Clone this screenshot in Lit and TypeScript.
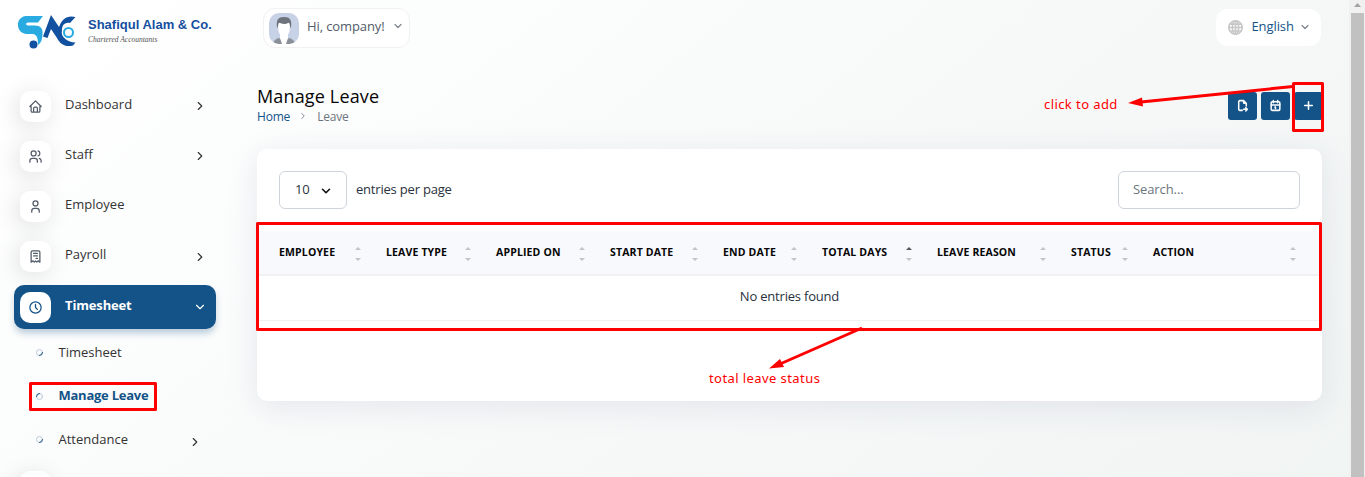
import { LitElement, html, css, svg } from "lit";
import { customElement } from "lit/decorators.js";
import { classMap } from "lit/directives/class-map.js";

const chevron = (cls: string, d = "M9 6l6 6-6 6") =>
  html`<svg class=${cls} viewBox="0 0 24 24"><path d=${d} /></svg>`;
const DOWN = "M6 9l6 6 6-6";

const icons: Record<string, unknown> = {
  home: svg`<path d="M5 12H3l9-9 9 9h-2M5 12v7a2 2 0 0 0 2 2h10a2 2 0 0 0 2-2v-7M9 21v-6a2 2 0 0 1 2-2h2a2 2 0 0 1 2 2v6"/>`,
  users: svg`<circle cx="9" cy="7" r="4"/><path d="M3 21v-2a4 4 0 0 1 4-4h4a4 4 0 0 1 4 4v2M16 3.13a4 4 0 0 1 0 7.75M21 21v-2a4 4 0 0 0-3-3.85"/>`,
  user: svg`<circle cx="12" cy="7" r="4"/><path d="M6 21v-2a4 4 0 0 1 4-4h4a4 4 0 0 1 4 4v2"/>`,
  receipt: svg`<path d="M5 21V5a2 2 0 0 1 2-2h10a2 2 0 0 1 2 2v16l-3-2-2 2-2-2-2 2-2-2-3 2M9 7h6M9 11h6M13 15h2"/>`,
  clock: svg`<circle cx="12" cy="12" r="9"/><path d="M12 7v5l3 3"/>`,
  exportFile: svg`<path d="M14 3v4a1 1 0 0 0 1 1h4M11.500 21H7a2 2 0 0 1-2-2V5a2 2 0 0 1 2-2h7l5 5v5m-5 6h7m-3-3l3 3-3 3"/>`,
  calendar: svg`<rect x="4" y="5" width="16" height="16" rx="2"/><path d="M16 3v4M8 3v4M4 11h16M11 15h1M12 15v3"/>`,
  plus: svg`<path d="M12 5v14M5 12h14"/>`,
};
const icon = (name: string, cls = "icon") =>
  html`<svg class=${cls} viewBox="0 0 24 24">${icons[name]}</svg>`;

const NAV = [
  { label: "Dashboard", icon: "home", arrow: true },
  { label: "Staff", icon: "users", arrow: true },
  { label: "Employee", icon: "user", arrow: false },
  { label: "Payroll", icon: "receipt", arrow: true },
];

const COLUMNS = [
  "Employee", "Leave Type", "Applied On", "Start Date", "End Date",
  "Total Days", "Leave Reason", "Status", "Action",
];

@customElement("side-nav")
class SideNav extends LitElement {
  static styles = css`
    :host { display: block; width: 230px; flex: none; color: #333; }
    svg { fill: none; stroke: currentColor; stroke-width: 2; stroke-linecap: round; stroke-linejoin: round; }
    .brand { height: 84px; box-sizing: border-box; padding: 14px 0 0 17px; display: flex; gap: 12px; }
    .mark { width: 59px; height: 35px; stroke: none; flex: none; }
    .name { font: bold 13px/18px "Liberation Sans", Arial, sans-serif; color: #164fa0; white-space: nowrap; padding-top: 2px; letter-spacing: 0; }
    .tag { font: italic 7.5px/11px "Liberation Serif", serif; color: #555; white-space: nowrap; }
    .row { display: flex; align-items: center; height: 44px; margin: 0 14px 6.25px; padding-left: 6px; box-sizing: border-box; border-radius: 10px; }
    .box { width: 31px; height: 31px; border-radius: 10px; background: #fff; box-shadow: -3px 4px 23px rgba(0, 0, 0, 0.12); display: grid; place-items: center; flex: none; color: #525b69; }
    .icon { width: 15px; height: 15px; stroke-width: 2; }
    .label { flex: 1; padding: 0 0 5px 14px; line-height: 18px; }
    .arrow { width: 14px; height: 14px; margin-right: 9px; }
    .row.active { color: #fff; background: #145388; font-weight: 700; letter-spacing: -0.15px; box-shadow: 0 5px 7px -1px rgba(20, 83, 136, 0.3); margin-bottom: 2px; }
    .active .box { color: #145388; box-shadow: none; }
    .sub { display: flex; align-items: center; height: 43.5px; padding-left: 36px; }
    .sub .label { padding: 0 0 1px 15.5px; }
    .sub .arrow { margin: 4px 28px 0 0; }
    .dot { width: 7px; height: 7px; stroke-width: 1; }
    .dim { stroke: #bccbdb; }
    .sub.current { color: #145388; font-weight: 700; letter-spacing: -0.25px; }
    .sub.current .label { padding-bottom: 3px; }
    .rest { margin-top: 3px; }
  `;
  render() {
    return html`
      <div class="brand">
        <svg class="mark" viewBox="0 0 59 35">
          <path fill="#29abe2" d="M9 2H26L21 8.500H11C8.500 8.500 8.500 11.500 11 11.500H18C24 11.500 26 15 25.500 20C25.500 25 24 29 21 31C21 25 20.500 21 16 20H9C-1.500 19-2 3 9 2Z" />
          <circle cx="16.500" cy="30.500" r="4" fill="#1250a0" />
          <path fill="#1250a0" d="M26 22.500L34 1L42 13C45 5 50 1 58.500 3L53 9C47 8 44.500 12 45 18C45.500 24 50 28 58.500 28.500L56 31.500C48 33.500 43 30 40 24L34 15L30.500 24Z" />
          <circle cx="51.500" cy="18.500" r="6.800" fill="#fff" />
          <circle cx="51.500" cy="18.500" r="4.500" fill="#fff" stroke="#29abe2" stroke-width="2" />
        </svg>
        <div><div class="name">Shafiqul Alam &amp; Co.</div><div class="tag">Chartered Accountants</div></div>
      </div>
      ${NAV.map((n) => html`
        <div class="row">
          <span class="box">${icon(n.icon)}</span><span class="label">${n.label}</span>
          ${n.arrow ? chevron("arrow") : ""}
        </div>`)}
      <div class="row active">
        <span class="box">${icon("clock")}</span><span class="label">Timesheet</span>
        ${chevron("arrow", DOWN)}
      </div>
      ${["Timesheet", "Manage Leave", "Attendance"].map((label, i) => html`
        <div class=${classMap({ sub: true, current: i === 1 })}>
          <svg class="dot" viewBox="0 0 7 7"><circle class="dim" cx="3.500" cy="3.500" r="3" /><path d=${i === 1 ? "M.5 3.500A3 3 0 0 1 3.500.5" : "M6.500 3.500A3 3 0 0 1 3.500 6.500"} stroke="#145388" /></svg>
          <span class="label">${label}</span>${i === 2 ? chevron("arrow") : ""}
        </div>`)}
      <div class="row rest"><span class="box"></span></div>
    `;
  }
}

@customElement("leave-table")
class LeaveTable extends LitElement {
  static styles = css`
    :host { display: block; }
    .head { display: grid; grid-template-columns: 107px 110px 114px 113px 99px 115px 134px 82px 1fr; padding-left: 22px; height: 43px; background: #f8f9fd; border-bottom: 2px solid #f1f1f1; }
    .cell { display: flex; align-items: center; justify-content: space-between; font-size: 10.5px; font-weight: 700; letter-spacing: 0.15px; color: #060606; text-transform: uppercase; padding-right: 25px; white-space: nowrap; }
    .cell:last-child { padding-right: 26px; }
    .text { padding-bottom: 1px; }
    .sort { width: 6px; height: 14px; fill: #c3c4c8; margin-top: 2px; }
    .sort .on { fill: #55565a; }
    .empty { height: 44px; line-height: 41px; text-align: center; letter-spacing: -0.2px; border-bottom: 1px solid #f1f1f1; color: #293240; }
  `;
  render() {
    return html`
      <div class="head">
        ${COLUMNS.map((c) => html`<div class="cell"><span class="text">${c}</span>
          <svg class="sort" viewBox="0 0 6 14"><path class=${c === "Total Days" ? "on" : ""} d="M0 3L3 0L6 3Z" /><path d="M0 11L3 14L6 11Z" /></svg></div>`)}
      </div>
      <div class="empty">No entries found</div>
    `;
  }
}

@customElement("app-root")
class AppRoot extends LitElement {
  static styles = css`
    :host { display: flex; position: relative; width: 1365px; height: 477px; overflow: hidden; font: 13px/18px "Open Sans", sans-serif; background: linear-gradient(141deg, rgba(240, 244, 243, 0) 3.46%, #f0f4f3 99.86%), #fff; }
    svg { fill: none; stroke: currentColor; stroke-width: 2; stroke-linecap: round; stroke-linejoin: round; }
    .main { flex: 1; padding: 8px 27px 0 27px; min-width: 0; }
    .top { display: flex; justify-content: space-between; height: 74px; align-items: flex-start; padding-left: 6px; }
    .pill { display: flex; align-items: center; box-sizing: border-box; background: #fff; border-radius: 12px; }
    .user { width: 147px; height: 40px; padding: 0 5px; border: 1px solid #f1f1f1; color: #525b69; letter-spacing: -0.1px; }
    .avatar { width: 30px; height: 31px; stroke: none; margin-right: 8px; }
    .user .label, .lang .label { flex: 1; padding-bottom: 3px; white-space: nowrap; }
    .user .label { padding-bottom: 5px; }
    .small { width: 12px; height: 12px; color: #7d838c; margin-bottom: 4px; stroke-width: 2.4; }
    .lang { width: 105px; height: 37px; margin: 1px 1px 0 0; padding: 0 10px 0 12px; color: #145388; letter-spacing: -0.1px; }
    .globe { width: 15px; height: 15px; margin-right: 8.5px; color: #c8c8c8; stroke-width: 2.6; }
    .lang .small { margin-bottom: 2px; }
    .title-row { display: flex; justify-content: space-between; height: 67px; }
    .title { font-size: 18px; line-height: 28px; color: #060606; font-weight: 400; margin: 0; letter-spacing: 0.15px; }
    .crumbs { display: flex; align-items: center; font-size: 12px; line-height: 14px; color: #6c757d; letter-spacing: -0.2px; }
    .crumbs .link { color: #145388; }
    .sep { width: 10px; height: 10px; margin: 0 9px 2px 8px; }
    .actions { display: flex; gap: 4px; padding-top: 10px; margin-right: -0.9px; }
    .btn { width: 29px; height: 28px; border-radius: 3px; background: #145388; color: #fff; display: grid; place-items: center; }
    .icon { width: 13px; height: 13px; stroke-width: 2.8; margin-bottom: 2px; }
    .card { background: #fff; border-radius: 10px; height: 252px; width: 1065px; box-shadow: 0 6px 30px rgba(182, 186, 203, 0.3); }
    .tools { display: flex; align-items: center; height: 82px; box-sizing: border-box; padding: 0 22px; color: #293240; }
    .field { height: 38px; border: 1px solid #ced4da; border-radius: 6px; box-sizing: border-box; display: flex; align-items: center; background: #fff; padding-bottom: 2px; }
    .count { width: 68px; padding-left: 15px; margin-right: 9px; letter-spacing: -0.2px; }
    .count .sel { width: 14px; height: 14px; margin: 3px 0 0 10px; color: #111; stroke-width: 2.8; }
    .per { padding-bottom: 3px; flex: 1; letter-spacing: -0.2px; }
    .search { width: 182px; padding-left: 14px; color: #6c757d; letter-spacing: -0.1px; }
    .scroll { width: 16px; background: #f1f1f1; flex: none; display: flex; flex-direction: column; align-items: center; box-sizing: border-box; padding-left: 1px; }
    .up { width: 7px; height: 4px; margin: 3px 0 6px; stroke: none; fill: #a3a3a3; }
    .thumb { width: 13px; flex: 1; background: #c1c1c1; }
    .marks { position: absolute; inset: 0; width: 1365px; height: 477px; stroke: #f00; stroke-width: 3; stroke-linecap: butt; }
    .marks .tip { fill: #f00; stroke: none; }
    .note { position: absolute; color: #f00; font: 13px/16px "Noto Sans", sans-serif; white-space: nowrap; letter-spacing: 0.42px; }
    .add { left: 1044px; top: 96px; }
    .status { left: 709px; top: 369.500px; }
  `;
  render() {
    return html`
      <side-nav></side-nav>
      <div class="main">
        <div class="top">
          <div class="pill user">
            <svg class="avatar" viewBox="0 0 30 31">
              <defs><clipPath id="a"><rect width="30" height="31" rx="10" /></clipPath></defs>
              <g clip-path="url(#a)">
                <rect width="30" height="31" fill="#c8d2e7" />
                <path fill="#8b8f98" d="M4 31Q5 26 10 25L15 29L20 25Q25 26 26 31Z" />
                <path fill="#fff" d="M11 20H19V25L17 31H13L11 25Z" />
                <path fill="#6f737c" d="M8 14C7 7 9 4 15 4S23 7 22 14L20 16H10Z" />
                <path fill="#fff" d="M9 13Q9.500 9 11 10Q16 12 19 10Q20.500 9 21 13C21 19 19 24 15 24S9 19 9 13Z" />
              </g>
            </svg>
            <span class="label">Hi, company!</span>${chevron("small", DOWN)}
          </div>
          <div class="pill lang">
            <svg class="globe" viewBox="0 0 24 24"><circle cx="12" cy="12" r="10.700" /><ellipse cx="12" cy="12" rx="5" ry="10.700" /><path d="M12 1v22M1 12h22M3 6.500h18M3 17.500h18" /></svg>
            <span class="label">English</span>${chevron("small", DOWN)}
          </div>
        </div>
        <div class="title-row">
          <div>
            <h4 class="title">Manage Leave</h4>
            <div class="crumbs"><span class="link">Home</span>${chevron("sep")}<span>Leave</span></div>
          </div>
          <div class="actions">
            <span class="btn">${icon("exportFile")}</span>
            <span class="btn">${icon("calendar")}</span>
            <span class="btn">${icon("plus")}</span>
          </div>
        </div>
        <div class="card">
          <div class="tools">
            <div class="field count">10${chevron("sel", DOWN)}</div>
            <span class="per">entries per page</span>
            <div class="field search">Search...</div>
          </div>
          <leave-table></leave-table>
        </div>
      </div>
      <div class="scroll"><svg class="up" viewBox="0 0 7 4"><path d="M0 4L3.500 0L7 4Z" /></svg><div class="thumb"></div></div>
      <svg class="marks" viewBox="0 0 1365 477">
        <rect x="30.500" y="383.500" width="125" height="26" />
        <rect x="257.500" y="223.500" width="1063" height="106" />
        <rect x="1293.500" y="83.500" width="29" height="47" />
        <path d="M1293 86.500L1141 102" />
        <path class="tip" d="M1128 103L1142 97.500L1143 106.500Z" />
        <path d="M862 328L780 364" />
        <path class="tip" d="M769 368.500L780 359L784 367Z" />
      </svg>
      <span class="note add">click to add</span>
      <span class="note status">total leave status</span>
    `;
  }
}
